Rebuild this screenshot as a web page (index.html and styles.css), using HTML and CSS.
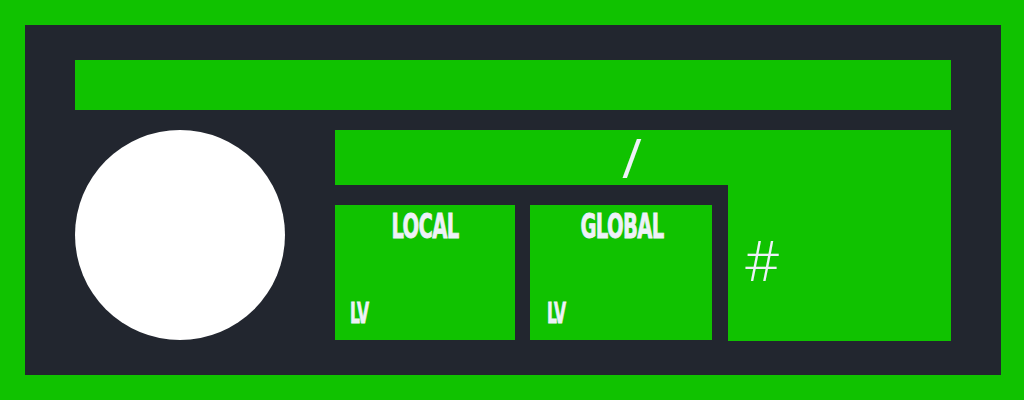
FILE: index.html
```html
<!DOCTYPE html>
<html>
<head>
    <link rel="stylesheet" href="styles.css">
</head>
<body>
    <div class="panel">
        <div class="title-bar"></div>
        <div class="main">
            <div class="avatar"></div>
            <div class="info">
                <div class="path">/</div>
                <div class="lower">
                    <div class="levels">
                        <div class="level">
                            <div class="level-name">LOCAL</div>
                            <div class="level-value">LV</div>
                        </div>
                        <div class="level global">
                            <div class="level-name">GLOBAL</div>
                            <div class="level-value">LV</div>
                        </div>
                    </div>
                    <div class="rank">#</div>
                </div>
            </div>
        </div>
    </div>
</body>
</html>
```

FILE: styles.css
```css
body {
    margin: 0;
    background: #10c200;
    font-family: "DejaVu Sans", sans-serif;
}
.panel {
    margin: 25px 23px 25px 25px;
    height: 350px;
    box-sizing: border-box;
    padding: 35px 50px;
    background: #22262f;
}
.title-bar {
    height: 50px;
    background: #10c200;
}
.main {
    display: flex;
    gap: 50px;
    margin-top: 20px;
}
.avatar {
    width: 210px;
    height: 210px;
    border-radius: 50%;
    background: #ffffff;
}
.info {
    flex: 1;
    display: flex;
    flex-direction: column;
}
.path {
    height: 55px;
    background: #10c200;
    color: #eef1f8;
    font-family: "Open Sans", sans-serif;
    font-size: 54px;
    line-height: 55px;
    text-align: center;
    padding-right: 22px;
}
.lower {
    display: flex;
    height: 156px;
}
.levels {
    width: 393px;
    display: flex;
    gap: 15px;
    padding: 20px 16px 1px 0;
    box-sizing: border-box;
}
.level {
    flex: 1;
    background: #10c200;
    color: #eef1f8;
    display: flex;
    flex-direction: column;
    justify-content: space-between;
    padding: 2px 15px 11px;
    font-family: "DejaVu Sans Condensed", "DejaVu Sans", sans-serif;
    font-weight: bold;
    -webkit-text-stroke: 0.8px #eef1f8;
}
.global {
    padding-left: 17px;
}
.level-name {
    text-align: center;
    font-size: 34px;
    line-height: 38px;
    transform: scaleX(0.64);
    letter-spacing: -1px;
}
.level-value {
    font-size: 28px;
    line-height: 30px;
    transform: scaleX(0.62);
    transform-origin: left center;
    letter-spacing: -1px;
}
.rank {
    flex: 1;
    background: #10c200;
    color: #eef1f8;
    font-family: "Open Sans", sans-serif;
    font-weight: 300;
    font-size: 56px;
    display: flex;
    align-items: center;
    padding: 0 0 8px 16px;
}
```
